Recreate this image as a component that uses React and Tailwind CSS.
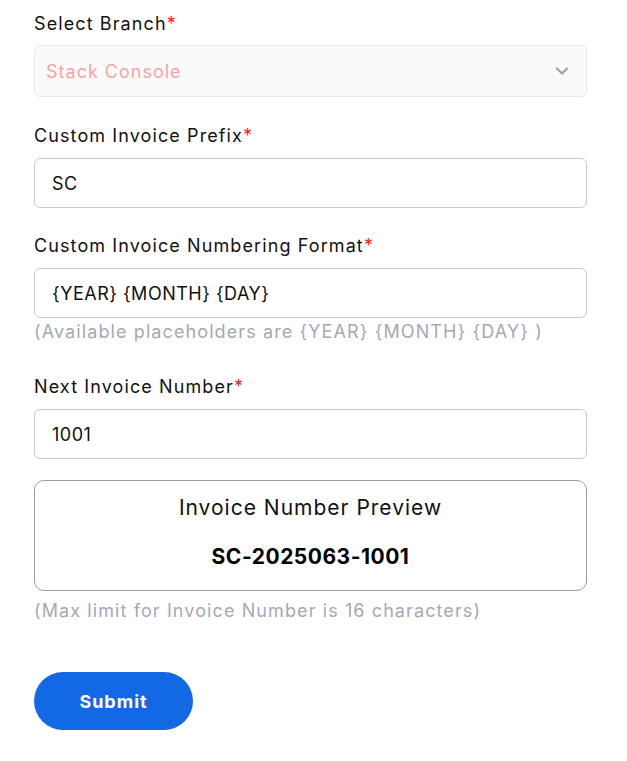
import { ChevronDown } from "lucide-react";

const font = { fontFamily: "Inter, 'Open Sans', sans-serif" };

function Label({ children }) {
  return (
    <label className="block text-[18px] leading-[24px] tracking-[1.1px] text-[#111]">
      {children}
      <span className="text-[#ff1a1a]">*</span>
    </label>
  );
}

function TextInput({ value }) {
  return (
    <input
      readOnly
      value={value}
      className="w-full h-[50px] rounded-[6px] border border-[#c9c9c9] bg-white px-[17px] text-[18px] tracking-[0.5px] text-[#111] outline-none"
    />
  );
}

export default function App() {
  return (
    <div className="bg-white min-h-[761px] px-[34px] pt-[12px] w-[621px]" style={font}>
      <Label>Select Branch</Label>
      <div className="mt-[9px] h-[52px] rounded-[6px] border border-[#e8e8ec] bg-[#fafafa] flex items-center justify-between pl-[11px] pr-[14px]">
        <span className="text-[18px] tracking-[1px] text-[#f7a4a4]">Stack Console</span>
        <ChevronDown className="w-[20px] h-[20px] text-[#a3a3ab]" strokeWidth={2.75} />
      </div>

      <div className="mt-[27px]">
        <Label>Custom Invoice Prefix</Label>
        <div className="mt-[10px]">
          <TextInput value="SC" />
        </div>
      </div>

      <div className="mt-[26px]">
        <Label>Custom Invoice Numbering Format</Label>
        <div className="mt-[10px]">
          <TextInput value="{YEAR} {MONTH} {DAY}" />
        </div>
        <p className="mt-[2px] text-[18px] leading-[24px] tracking-[1.1px] text-[#a4a9b6]">
          (Available placeholders are {"{YEAR}"} {"{MONTH}"} {"{DAY}"} )
        </p>
      </div>

      <div className="mt-[31px]">
        <Label>Next Invoice Number</Label>
        <div className="mt-[10px]">
          <TextInput value="1001" />
        </div>
      </div>

      <div className="mt-[21px] h-[111px] rounded-[10px] border border-[#9c9c9c] flex flex-col items-center pt-[13px]">
        <p className="text-[21px] leading-[28px] tracking-[1px] text-[#111]">Invoice Number Preview</p>
        <p className="mt-[21px] text-[21px] leading-[28px] tracking-[0.5px] font-bold text-black">
          SC-2025063-1001
        </p>
      </div>
      <p className="mt-[8px] text-[18px] leading-[24px] tracking-[1.1px] text-[#a4a9b6]">
        (Max limit for Invoice Number is 16 characters)
      </p>

      <button className="mt-[49px] w-[159px] h-[58px] rounded-full bg-[#1368e3] text-white text-[18px] tracking-[1px] font-bold">
        Submit
      </button>
    </div>
  );
}
